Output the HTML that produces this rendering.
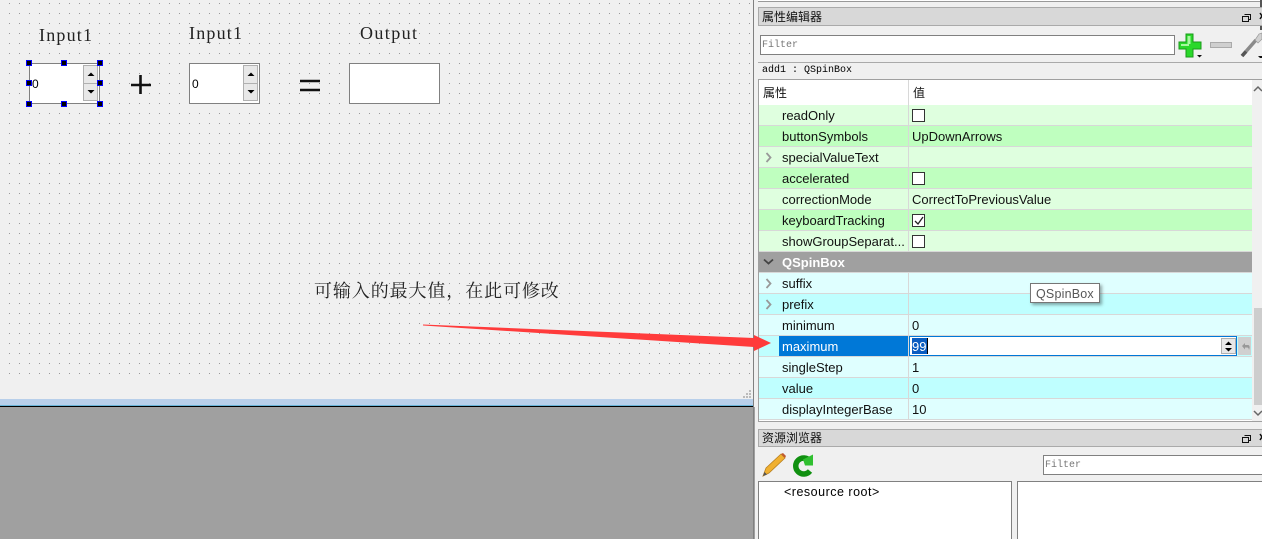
<!DOCTYPE html>
<html><head><meta charset="utf-8">
<style>
html,body{margin:0;padding:0;background:#f0f0f0}
#r{position:relative;width:1262px;height:539px;overflow:hidden;background:#f0f0f0;font-family:"Liberation Sans","Noto Sans CJK SC",sans-serif;font-size:13px;color:#111}
#r div{position:absolute;box-sizing:border-box}
.lab{font-family:"Liberation Serif",serif;font-size:18px;letter-spacing:1.200px;line-height:20px;white-space:nowrap;color:#222}
.box{background:#fff;border:1px solid #808080}
.h{width:6px;height:6px;background:#000;border:1px solid #00f}
.row{left:759px;width:493px;height:21px;border-bottom:1px solid #d8d8d8}
.n{left:23px;top:1px;line-height:20px;white-space:nowrap}
.v{left:153px;top:1px;line-height:20px;white-space:nowrap}
.sep{left:149px;top:0;width:1px;height:21px;background:#d8d8d8}
.cb{left:153px;top:4px;width:13px;height:13px;background:#fff;border:1px solid #333}
.sb{background:#e8e8e8;border:1px solid #b0b0b0}
.mono{font-family:"Liberation Mono",monospace;font-size:10px;white-space:nowrap}
.dock{left:758px;width:504px;background:#d8d8d8;border:1px solid #aaa;border-right:0;font-size:12px;line-height:18px;padding-left:3px;white-space:nowrap}
</style></head><body><div id="r">

<svg style="position:absolute;left:0;top:0" width="752" height="380"><defs><pattern id="g" x="9" y="3" width="10" height="10" patternUnits="userSpaceOnUse"><rect width="1" height="1" fill="#999"/></pattern></defs><rect width="752" height="376" fill="url(#g)"/></svg>

<div class="lab" style="left:39px;top:25px">Input1</div>
<div class="lab" style="left:189px;top:23px">Input1</div>
<div class="lab" style="left:360px;top:23px;letter-spacing:1.400px">Output</div>

<div class="box" style="left:29px;top:63px;width:71px;height:41px"></div>
<div style="left:32px;top:77px;font-size:12px;line-height:14px;color:#000">0</div>
<div class="sb" style="left:83px;top:65px;width:15px;height:19px"></div>
<div class="sb" style="left:83px;top:83px;width:15px;height:18px"></div>

<div class="box" style="left:189px;top:63px;width:71px;height:41px"></div>
<div style="left:192px;top:77px;font-size:12px;line-height:14px;color:#000">0</div>
<div class="sb" style="left:243px;top:65px;width:15px;height:19px"></div>
<div class="sb" style="left:243px;top:83px;width:15px;height:18px"></div>

<div class="box" style="left:349px;top:63px;width:91px;height:41px"></div>

<svg style="position:absolute;left:0;top:0" width="320" height="110">
<path d="M87.500 76l3.500-3.500 3.500 3.500zM87.500 90l3.500 3.500 3.500-3.500zM247.500 76l3.500-3.500 3.500 3.500zM247.500 90l3.500 3.500 3.500-3.500z" fill="#000"/>
<path d="M131 85h20M140.500 75v19" stroke="#111" stroke-width="2.600" fill="none"/>
<path d="M300 81h21M300 90h21" stroke="#111" stroke-width="2.600" fill="none"/>
</svg>

<div class="h" style="left:26px;top:60px"></div><div class="h" style="left:61px;top:60px"></div><div class="h" style="left:97px;top:60px"></div>
<div class="h" style="left:26px;top:80px"></div><div class="h" style="left:97px;top:80px"></div>
<div class="h" style="left:26px;top:101px"></div><div class="h" style="left:61px;top:101px"></div><div class="h" style="left:97px;top:101px"></div>

<div style="left:314px;top:279px;font-family:'Liberation Serif','Noto Serif CJK SC',serif;font-size:18px;letter-spacing:.9px;line-height:24px;white-space:nowrap;color:#222">可输入的最大值&#xFF0C;在此可修改</div>

<svg style="position:absolute;left:742px;top:389px" width="10" height="10"><path d="M7 1h2v2H7zM4 4h2v2H4zM7 4h2v2H7zM1 7h2v2H1zM4 7h2v2H4zM7 7h2v2H7z" fill="#bbb"/></svg>

<div style="left:0;top:399px;width:753px;height:6px;background:#b8cfea"></div>
<div style="left:0;top:405px;width:753px;height:1px;background:#6ab4d8"></div>
<div style="left:0;top:406px;width:753px;height:1px;background:#000"></div>
<div style="left:0;top:407px;width:753px;height:132px;background:#a0a0a0"></div>
<div style="left:753px;top:0;width:1px;height:539px;background:#808080"></div>
<div style="left:754px;top:407px;width:1px;height:132px;background:#a0a0a0"></div>

<div style="left:758px;top:0;width:504px;height:2px;background:#fff;border-bottom:1px solid #999"></div>
<div style="left:1260px;top:0;width:2px;height:30px;background:#555"></div>

<div class="dock" style="top:7px;height:19px">属性编辑器</div>
<svg style="position:absolute;left:1240px;top:11px" width="22" height="12"><path d="M4.500 3.500h6v5h-2M2.500 5.500h6v5h-6z" fill="none" stroke="#111"/><path d="M20 2l4 6M24 2l-4 6" stroke="#111" stroke-width="1.500"/></svg>

<div class="box" style="left:760px;top:35px;width:415px;height:20px"></div>
<div class="mono" style="left:762px;top:40px;line-height:11px;color:#777">Filter</div>

<svg style="position:absolute;left:1176px;top:31px" width="86" height="28">
<path d="M10 3h7v8h8v7h-8v8h-7v-8H3v-7h7z" fill="#2ad82a" stroke="#1a9a1a"/>
<path d="M11.500 5h3v8h-3zM5 13h8v2H5z" fill="#a8f8a0"/>
<path d="M21 24h5l-2.500 2.500z" fill="#111"/>
<rect x="34.500" y="11.500" width="21" height="5" fill="#cfcfcf" stroke="#aaa"/>
<path d="M66 25L80 9" stroke="#8a8a8a" stroke-width="3.500"/>
<path d="M79 9l4-6 3-1v6l-4 4z" fill="#d0d0d0" stroke="#999" stroke-width=".7"/>
<path d="M66 25l4-4.500" stroke="#555" stroke-width="3.500"/>
<path d="M82 25h4v2h-2z" fill="#111"/>
</svg>

<div style="left:758px;top:62px;width:504px;height:1px;background:#aaa"></div>
<div class="mono" style="left:762px;top:65px;line-height:11px;color:#000">add1 : QSpinBox</div>

<div style="left:758px;top:79px;width:504px;height:343px;border:1px solid #a0a0a0;border-right:0;background:#fff"></div>
<div style="left:908px;top:80px;width:1px;height:25px;background:#d8d8d8"></div>
<div style="left:763px;top:85px;line-height:17px;font-size:12px">属性</div>
<div style="left:913px;top:85px;line-height:17px;font-size:12px">值</div>

<div style="left:1252px;top:80px;width:10px;height:341px;background:#f0f0f0"></div>
<div style="left:1254px;top:308px;width:8px;height:97px;background:#cdcdcd"></div>
<svg style="position:absolute;left:1252px;top:80px" width="10" height="342"><path d="M2 11l4-4 4 4M2 331l4 4 4-4" fill="none" stroke="#666" stroke-width="1.500"/></svg>

<div class="row" style="top:105px;background:#dfffdf"><div class="n">readOnly</div><div class="sep"></div><div class="cb"></div></div>
<div class="row" style="top:126px;background:#bfffbf"><div class="n">buttonSymbols</div><div class="sep"></div><div class="v">UpDownArrows</div></div>
<div class="row" style="top:147px;background:#dfffdf"><svg style="position:absolute;left:6px;top:5px" width="8" height="11"><path d="M1.500 1l4 4.500-4 4.500" fill="none" stroke="#999" stroke-width="1.800"/></svg><div class="n">specialValueText</div><div class="sep"></div></div>
<div class="row" style="top:168px;background:#bfffbf"><div class="n">accelerated</div><div class="sep"></div><div class="cb"></div></div>
<div class="row" style="top:189px;background:#dfffdf"><div class="n">correctionMode</div><div class="sep"></div><div class="v">CorrectToPreviousValue</div></div>
<div class="row" style="top:210px;background:#bfffbf"><div class="n">keyboardTracking</div><div class="sep"></div><div class="cb"></div><svg style="position:absolute;left:155px;top:6px" width="10" height="10"><path d="M1 5l3 3 5-7" fill="none" stroke="#222" stroke-width="1.300"/></svg></div>
<div class="row" style="top:231px;background:#dfffdf"><div class="n">showGroupSeparat...</div><div class="sep"></div><div class="cb"></div></div>
<div class="row" style="top:252px;background:#a0a0a0;border-bottom:1px solid #d8d8d8"><svg style="position:absolute;left:4px;top:6px" width="11" height="8"><path d="M1 1.500l4.500 4 4.500-4" fill="none" stroke="#444" stroke-width="1.800"/></svg><div class="n" style="color:#fff;font-weight:bold">QSpinBox</div></div>
<div class="row" style="top:273px;background:#dfffff"><svg style="position:absolute;left:6px;top:5px" width="8" height="11"><path d="M1.500 1l4 4.500-4 4.500" fill="none" stroke="#999" stroke-width="1.800"/></svg><div class="n">suffix</div><div class="sep"></div></div>
<div class="row" style="top:294px;background:#bfffff"><svg style="position:absolute;left:6px;top:5px" width="8" height="11"><path d="M1.500 1l4 4.500-4 4.500" fill="none" stroke="#999" stroke-width="1.800"/></svg><div class="n">prefix</div><div class="sep"></div></div>
<div class="row" style="top:315px;background:#dfffff"><div class="n">minimum</div><div class="sep"></div><div class="v">0</div></div>
<div class="row" style="top:336px;background:#bfffff">
  <div style="left:20px;top:0;width:129px;height:20px;background:#0078d7"></div>
  <div class="n" style="color:#fff">maximum</div><div class="sep"></div>
  <div style="left:150px;top:0;width:328px;height:20px;background:#fff;border:1px solid #0078d7"></div>
  <div style="left:153px;top:2px;width:15px;height:16px;background:#0a5cc0"></div>
  <div style="left:168px;top:2px;width:1px;height:16px;background:#000"></div>
  <div class="v" style="color:#fff">99</div>
  <div class="sb" style="left:462px;top:2px;width:15px;height:16px"></div>
  <div style="left:479px;top:1px;width:13px;height:18px;background:#d0d0d0"></div>
  <svg style="position:absolute;left:462px;top:2px" width="32" height="16"><path d="M4 7l3.500-3.500 3.500 3.500zM4 10l3.500 3.500 3.500-3.500z" fill="#000"/><path d="M21 8l3-3v2h3c2 0 2 3 1 5-.3-2-1-2.500-2-2.500h-2v2z" fill="#999"/></svg>
</div>
<div class="row" style="top:357px;background:#dfffff"><div class="n">singleStep</div><div class="sep"></div><div class="v">1</div></div>
<div class="row" style="top:378px;background:#bfffff"><div class="n">value</div><div class="sep"></div><div class="v">0</div></div>
<div class="row" style="top:399px;background:#dfffff"><div class="n">displayIntegerBase</div><div class="sep"></div><div class="v">10</div></div>

<div style="left:1030px;top:283px;width:70px;height:20px;background:#fff;border:1px solid #767676;box-shadow:2px 2px 3px rgba(0,0,0,.35);color:#575757;font-size:12.500px;line-height:20px;padding-left:5px;white-space:nowrap;letter-spacing:.2px">QSpinBox</div>

<div class="dock" style="top:429px;height:18px;line-height:17px">资源浏览器</div>
<svg style="position:absolute;left:1240px;top:432px" width="22" height="12"><path d="M4.500 3.500h6v5h-2M2.500 5.500h6v5h-6z" fill="none" stroke="#111"/><path d="M20 2l4 6M24 2l-4 6" stroke="#111" stroke-width="1.500"/></svg>

<svg style="position:absolute;left:760px;top:451px" width="56" height="28">
<path d="M3 25l3-8L21 3l4 4L9 22z" fill="#f0b030" stroke="#b88020" stroke-width=".8"/>
<path d="M21 3l2-1 3 3-1 2z" fill="#c05a30"/>
<path d="M3 25l1.500-4 2.500 2.500z" fill="#555"/>
<path d="M50 10A8 8 0 1 0 50 20" fill="none" stroke="#109010" stroke-width="5.500"/>
<path d="M43 8.500l10-5v11h-8z" fill="#30c030"/>
</svg>

<div class="box" style="left:1043px;top:455px;width:219px;height:20px;border-right:0"></div>
<div class="mono" style="left:1045px;top:460px;line-height:11px;color:#777">Filter</div>

<div class="box" style="left:758px;top:481px;width:254px;height:60px"></div>
<div class="box" style="left:1017px;top:481px;width:245px;height:60px;border-right:0"></div>
<div style="left:784px;top:484px;line-height:16px;font-size:12.500px;letter-spacing:.5px;white-space:nowrap;color:#000">&lt;resource root&gt;</div>

<svg style="position:absolute;left:420px;top:320px" width="360" height="36"><path d="M3 4.500L334 18V15L351 23 334 31V27L3 5.500Z" fill="#ff3b3b"/></svg>

</div></body></html>
